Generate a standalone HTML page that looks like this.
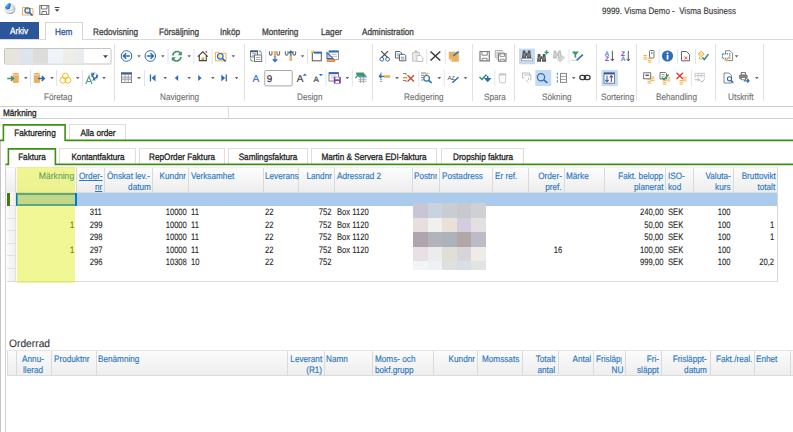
<!DOCTYPE html>
<html><head><meta charset="utf-8">
<style>
*{margin:0;padding:0;box-sizing:border-box}
html,body{width:793px;height:432px;overflow:hidden;background:#fff}
body{position:relative;font-family:"Liberation Sans",sans-serif;font-size:9.3px;color:#1e1e1e;text-rendering:geometricPrecision;-webkit-text-stroke:0.3px}
.t{position:absolute;white-space:nowrap;line-height:10px;transform:scaleX(0.88)}
.b{position:absolute}
svg{position:absolute}
</style></head><body>

<div class="t" style="top:6px;left:602px;transform-origin:0 0;color:#3a3a3a;transform:scaleX(.86);-webkit-text-stroke:0.15px;">9999. Visma Demo -&nbsp; Visma Business</div>
<div class="b" style="left:0px;top:22px;width:39px;height:17px;background:#2b579a;"></div>
<div class="t" style="top:26px;left:10px;transform-origin:0 0;color:#fff;-webkit-text-stroke:0.25px #fff;">Arkiv</div>
<div class="b" style="left:45px;top:22px;width:38px;height:18px;background:#fff;border:1px solid #d4d4d4;border-bottom:none;z-index:2"></div>
<div class="t" style="top:27px;left:54.5px;transform-origin:0 0;color:#2b579a;z-index:3;">Hem</div>
<div class="t" style="top:27px;left:93px;transform-origin:0 0;color:#444;">Redovisning</div>
<div class="t" style="top:27px;left:159px;transform-origin:0 0;color:#444;">Försäljning</div>
<div class="t" style="top:27px;left:220px;transform-origin:0 0;color:#444;">Inköp</div>
<div class="t" style="top:27px;left:262px;transform-origin:0 0;color:#444;">Montering</div>
<div class="t" style="top:27px;left:321px;transform-origin:0 0;color:#444;">Lager</div>
<div class="t" style="top:27px;left:362px;transform-origin:0 0;color:#444;">Administration</div>
<div class="b" style="left:0px;top:39px;width:793px;height:1px;background:#dadada;"></div>
<div class="b" style="left:0px;top:106px;width:793px;height:1px;background:#cfcfcf;"></div>
<div class="b" style="left:114px;top:44px;width:1px;height:57px;background:#e2e2e2;"></div>
<div class="b" style="left:244px;top:44px;width:1px;height:57px;background:#e2e2e2;"></div>
<div class="b" style="left:372px;top:44px;width:1px;height:57px;background:#e2e2e2;"></div>
<div class="b" style="left:472px;top:44px;width:1px;height:57px;background:#e2e2e2;"></div>
<div class="b" style="left:514px;top:44px;width:1px;height:57px;background:#e2e2e2;"></div>
<div class="b" style="left:596px;top:44px;width:1px;height:57px;background:#e2e2e2;"></div>
<div class="b" style="left:636px;top:44px;width:1px;height:57px;background:#e2e2e2;"></div>
<div class="b" style="left:715px;top:44px;width:1px;height:57px;background:#e2e2e2;"></div>
<div class="b" style="left:763px;top:44px;width:1px;height:57px;background:#e2e2e2;"></div>
<div class="t" style="top:92px;left:44.3px;transform-origin:0 0;color:#6e6e6e;-webkit-text-stroke:0.1px;">Företag</div>
<div class="t" style="top:92px;left:160px;transform-origin:0 0;color:#6e6e6e;-webkit-text-stroke:0.1px;">Navigering</div>
<div class="t" style="top:92px;left:296.5px;transform-origin:0 0;color:#6e6e6e;-webkit-text-stroke:0.1px;">Design</div>
<div class="t" style="top:92px;left:404px;transform-origin:0 0;color:#6e6e6e;-webkit-text-stroke:0.1px;">Redigering</div>
<div class="t" style="top:92px;left:484px;transform-origin:0 0;color:#6e6e6e;-webkit-text-stroke:0.1px;">Spara</div>
<div class="t" style="top:92px;left:542px;transform-origin:0 0;color:#6e6e6e;-webkit-text-stroke:0.1px;">Sökning</div>
<div class="t" style="top:92px;left:600.7px;transform-origin:0 0;color:#6e6e6e;-webkit-text-stroke:0.1px;">Sortering</div>
<div class="t" style="top:92px;left:656.4px;transform-origin:0 0;color:#6e6e6e;-webkit-text-stroke:0.1px;">Behandling</div>
<div class="t" style="top:92px;left:728px;transform-origin:0 0;color:#6e6e6e;-webkit-text-stroke:0.1px;">Utskrift</div>
<div class="b" style="left:0px;top:118px;width:793px;height:1px;background:#cfcfcf;"></div>
<div class="b" style="left:228px;top:107px;width:1px;height:11px;background:#dcdcdc;"></div>
<div class="t" style="top:108px;left:3px;transform-origin:0 0;color:#1e1e1e;">Märkning</div>
<div class="b" style="left:69px;top:124px;width:57px;height:17px;background:#fff;border:1px solid #dedede;border-bottom:none"></div>
<div class="t" style="top:128px;left:-2.5px;width:200px;text-align:center;transform-origin:50% 0;">Alla order</div>
<div class="b" style="left:3px;top:124px;width:63px;height:17px;background:#fff;z-index:2"></div>
<div class="t" style="top:128px;left:-65px;width:200px;text-align:center;transform-origin:50% 0;z-index:3;">Fakturering</div>
<svg style="left:0;top:0;z-index:3" width="793" height="170"><path d="M0 140.4H3.4V124.9H65.1V140.4H793M5.5 164.4H8.4V148.9H55.4V164.4H793" fill="none" stroke="#3f9010" stroke-width="1.6"/></svg>
<div class="b" style="left:0px;top:141px;width:1px;height:291px;background:#c6c6c6;"></div>
<div class="b" style="left:5px;top:165px;width:1px;height:267px;background:#d2d2d2;"></div>
<div class="b" style="left:59px;top:148px;width:77px;height:16px;background:#fff;border:1px solid #dedede;border-bottom:none"></div>
<div class="t" style="top:152px;left:-2.5px;width:200px;text-align:center;transform-origin:50% 0;">Kontantfaktura</div>
<div class="b" style="left:139px;top:148px;width:86px;height:16px;background:#fff;border:1px solid #dedede;border-bottom:none"></div>
<div class="t" style="top:152px;left:82.0px;width:200px;text-align:center;transform-origin:50% 0;">RepOrder Faktura</div>
<div class="b" style="left:228px;top:148px;width:80px;height:16px;background:#fff;border:1px solid #dedede;border-bottom:none"></div>
<div class="t" style="top:152px;left:168.0px;width:200px;text-align:center;transform-origin:50% 0;">Samlingsfaktura</div>
<div class="b" style="left:311px;top:148px;width:126px;height:16px;background:#fff;border:1px solid #dedede;border-bottom:none"></div>
<div class="t" style="top:152px;left:274.0px;width:200px;text-align:center;transform-origin:50% 0;">Martin &amp; Servera EDI-faktura</div>
<div class="b" style="left:441px;top:148px;width:83px;height:16px;background:#fff;border:1px solid #dedede;border-bottom:none"></div>
<div class="t" style="top:152px;left:382.5px;width:200px;text-align:center;transform-origin:50% 0;">Dropship faktura</div>
<div class="b" style="left:8px;top:148px;width:48px;height:16px;background:#fff;z-index:2"></div>
<div class="t" style="top:152px;left:-68px;width:200px;text-align:center;transform-origin:50% 0;z-index:3;">Faktura</div>
<div class="b" style="left:6px;top:167px;width:771px;height:26px;background:linear-gradient(#fdfdfd,#ededed);border-top:1px solid #f0f0f0;border-bottom:1px solid #dcdcdc"></div>
<div class="b" style="left:7px;top:192px;width:9px;height:89px;background:linear-gradient(90deg,#fafafa,#efefef);"></div>
<div class="b" style="left:15px;top:192px;width:1px;height:89px;background:#e2e2e2;"></div>
<div class="b" style="left:15px;top:168px;width:1px;height:24px;background:#dadada;"></div>
<div class="b" style="left:76px;top:168px;width:1px;height:24px;background:#dadada;"></div>
<div class="b" style="left:104px;top:168px;width:1px;height:24px;background:#dadada;"></div>
<div class="b" style="left:152px;top:168px;width:1px;height:24px;background:#dadada;"></div>
<div class="b" style="left:188px;top:168px;width:1px;height:24px;background:#dadada;"></div>
<div class="b" style="left:263px;top:168px;width:1px;height:24px;background:#dadada;"></div>
<div class="b" style="left:298px;top:168px;width:1px;height:24px;background:#dadada;"></div>
<div class="b" style="left:334px;top:168px;width:1px;height:24px;background:#dadada;"></div>
<div class="b" style="left:412px;top:168px;width:1px;height:24px;background:#dadada;"></div>
<div class="b" style="left:439px;top:168px;width:1px;height:24px;background:#dadada;"></div>
<div class="b" style="left:492px;top:168px;width:1px;height:24px;background:#dadada;"></div>
<div class="b" style="left:528px;top:168px;width:1px;height:24px;background:#dadada;"></div>
<div class="b" style="left:564px;top:168px;width:1px;height:24px;background:#dadada;"></div>
<div class="b" style="left:604px;top:168px;width:1px;height:24px;background:#dadada;"></div>
<div class="b" style="left:665px;top:168px;width:1px;height:24px;background:#dadada;"></div>
<div class="b" style="left:693px;top:168px;width:1px;height:24px;background:#dadada;"></div>
<div class="b" style="left:733px;top:168px;width:1px;height:24px;background:#dadada;"></div>
<div class="b" style="left:777px;top:167px;width:1px;height:114px;background:#d8d8d8;"></div>
<div class="b" style="left:16px;top:193px;width:761px;height:13px;background:#abcbee;"></div>
<div class="b" style="left:7px;top:205px;width:9px;height:1px;background:#e0e0e0;"></div>
<div class="b" style="left:7px;top:218px;width:9px;height:1px;background:#e0e0e0;"></div>
<div class="b" style="left:7px;top:230px;width:9px;height:1px;background:#e0e0e0;"></div>
<div class="b" style="left:7px;top:243px;width:9px;height:1px;background:#e0e0e0;"></div>
<div class="b" style="left:7px;top:255px;width:9px;height:1px;background:#e0e0e0;"></div>
<div class="b" style="left:7px;top:268px;width:9px;height:1px;background:#e0e0e0;"></div>
<div class="b" style="left:7px;top:281px;width:771px;height:1px;background:#dcdcdc;"></div>
<div class="b" style="left:7px;top:193px;width:3px;height:13px;background:#3d7d0a;"></div>
<div class="b" style="left:16px;top:193px;width:61px;height:13px;background:transparent;border:2px solid #0078d7;z-index:1"></div>
<div class="b" style="left:16px;top:168px;width:60px;height:24px;background:linear-gradient(#fdfdfd,#f6f6f6);"></div>
<div class="t" style="top:171px;right:718.9px;transform-origin:100% 0;text-align:right;color:#0f72a8;-webkit-text-stroke:0.15px #0f72a8;transform:scaleX(.93);">Märkning</div>
<div class="t" style="top:171px;left:78.7px;transform-origin:0 0;color:#2b78c2;-webkit-text-stroke:0.15px #2b78c2;transform:scaleX(.88);"><u>Order-</u></div>
<div class="t" style="top:182px;right:691px;transform-origin:100% 0;text-align:right;color:#2b78c2;-webkit-text-stroke:0.15px #2b78c2;transform:scaleX(.88);"><u>nr</u></div>
<div class="t" style="top:171px;left:106.5px;transform-origin:0 0;color:#2b78c2;-webkit-text-stroke:0.15px #2b78c2;transform:scaleX(.88);">Önskat lev.-</div>
<div class="t" style="top:182px;right:642.5px;transform-origin:100% 0;text-align:right;color:#2b78c2;-webkit-text-stroke:0.15px #2b78c2;transform:scaleX(.88);">datum</div>
<div class="t" style="top:171px;right:606.6px;transform-origin:100% 0;text-align:right;color:#2b78c2;-webkit-text-stroke:0.15px #2b78c2;transform:scaleX(.88);">Kundnr</div>
<div class="t" style="top:171px;left:191px;transform-origin:0 0;color:#2b78c2;-webkit-text-stroke:0.15px #2b78c2;transform:scaleX(.88);">Verksamhet</div>
<div class="t" style="top:171px;left:264.6px;transform-origin:0 0;color:#2b78c2;-webkit-text-stroke:0.15px #2b78c2;transform:scaleX(.88);">Leverans</div>
<div class="t" style="top:171px;right:461px;transform-origin:100% 0;text-align:right;color:#2b78c2;-webkit-text-stroke:0.15px #2b78c2;transform:scaleX(.88);">Landnr</div>
<div class="t" style="top:171px;left:336.6px;transform-origin:0 0;color:#2b78c2;-webkit-text-stroke:0.15px #2b78c2;transform:scaleX(.88);">Adressrad 2</div>
<div class="t" style="top:171px;left:414.4px;transform-origin:0 0;color:#2b78c2;-webkit-text-stroke:0.15px #2b78c2;transform:scaleX(.88);"><span style="display:inline-block;width:26px;overflow:hidden;vertical-align:top">Postnr</span></div>
<div class="t" style="top:171px;left:441.8px;transform-origin:0 0;color:#2b78c2;-webkit-text-stroke:0.15px #2b78c2;transform:scaleX(.88);">Postadress</div>
<div class="t" style="top:171px;left:494.8px;transform-origin:0 0;color:#2b78c2;-webkit-text-stroke:0.15px #2b78c2;transform:scaleX(.88);">Er ref.</div>
<div class="t" style="top:171px;right:231px;transform-origin:100% 0;text-align:right;color:#2b78c2;-webkit-text-stroke:0.15px #2b78c2;transform:scaleX(.88);">Order-</div>
<div class="t" style="top:182px;right:231px;transform-origin:100% 0;text-align:right;color:#2b78c2;-webkit-text-stroke:0.15px #2b78c2;transform:scaleX(.88);">pref.</div>
<div class="t" style="top:171px;left:566.4px;transform-origin:0 0;color:#2b78c2;-webkit-text-stroke:0.15px #2b78c2;transform:scaleX(.88);">Märke</div>
<div class="t" style="top:171px;right:129.89999999999998px;transform-origin:100% 0;text-align:right;color:#2b78c2;-webkit-text-stroke:0.15px #2b78c2;transform:scaleX(.88);">Fakt. belopp</div>
<div class="t" style="top:182px;right:129.89999999999998px;transform-origin:100% 0;text-align:right;color:#2b78c2;-webkit-text-stroke:0.15px #2b78c2;transform:scaleX(.88);">planerat</div>
<div class="t" style="top:171px;left:667.7px;transform-origin:0 0;color:#2b78c2;-webkit-text-stroke:0.15px #2b78c2;transform:scaleX(.88);">ISO-</div>
<div class="t" style="top:182px;left:667.7px;transform-origin:0 0;color:#2b78c2;-webkit-text-stroke:0.15px #2b78c2;transform:scaleX(.88);">kod</div>
<div class="t" style="top:171px;right:62.299999999999955px;transform-origin:100% 0;text-align:right;color:#2b78c2;-webkit-text-stroke:0.15px #2b78c2;transform:scaleX(.88);">Valuta-</div>
<div class="t" style="top:182px;right:62.299999999999955px;transform-origin:100% 0;text-align:right;color:#2b78c2;-webkit-text-stroke:0.15px #2b78c2;transform:scaleX(.88);">kurs</div>
<div class="t" style="top:171px;right:17.700000000000045px;transform-origin:100% 0;text-align:right;color:#2b78c2;-webkit-text-stroke:0.15px #2b78c2;transform:scaleX(.88);">Bruttovikt</div>
<div class="t" style="top:182px;right:17.700000000000045px;transform-origin:100% 0;text-align:right;color:#2b78c2;-webkit-text-stroke:0.15px #2b78c2;transform:scaleX(.88);">totalt</div>
<div class="t" style="top:207px;right:690.8px;transform-origin:100% 0;text-align:right;transform:scaleX(.82);-webkit-text-stroke:0.1px;">311</div>
<div class="t" style="top:207px;right:606.6px;transform-origin:100% 0;text-align:right;transform:scaleX(.82);-webkit-text-stroke:0.1px;">10000</div>
<div class="t" style="top:207px;left:191.2px;transform-origin:0 0;transform:scaleX(.82);-webkit-text-stroke:0.1px;">11</div>
<div class="t" style="top:207px;left:264.5px;transform-origin:0 0;transform:scaleX(.82);-webkit-text-stroke:0.1px;">22</div>
<div class="t" style="top:207px;right:461px;transform-origin:100% 0;text-align:right;transform:scaleX(.82);-webkit-text-stroke:0.1px;">752</div>
<div class="t" style="top:207px;left:336.5px;transform-origin:0 0;transform:scaleX(.82);-webkit-text-stroke:0.1px;">Box 1120</div>
<div class="t" style="top:207px;right:129.5px;transform-origin:100% 0;text-align:right;transform:scaleX(.82);-webkit-text-stroke:0.1px;">240,00</div>
<div class="t" style="top:207px;left:667.6px;transform-origin:0 0;transform:scaleX(.82);-webkit-text-stroke:0.1px;">SEK</div>
<div class="t" style="top:207px;right:62.200000000000045px;transform-origin:100% 0;text-align:right;transform:scaleX(.82);-webkit-text-stroke:0.1px;">100</div>
<div class="t" style="top:220px;right:718.5px;transform-origin:100% 0;text-align:right;transform:scaleX(.82);-webkit-text-stroke:0.1px;">1</div>
<div class="t" style="top:220px;right:690.8px;transform-origin:100% 0;text-align:right;transform:scaleX(.82);-webkit-text-stroke:0.1px;">299</div>
<div class="t" style="top:220px;right:606.6px;transform-origin:100% 0;text-align:right;transform:scaleX(.82);-webkit-text-stroke:0.1px;">10000</div>
<div class="t" style="top:220px;left:191.2px;transform-origin:0 0;transform:scaleX(.82);-webkit-text-stroke:0.1px;">11</div>
<div class="t" style="top:220px;left:264.5px;transform-origin:0 0;transform:scaleX(.82);-webkit-text-stroke:0.1px;">22</div>
<div class="t" style="top:220px;right:461px;transform-origin:100% 0;text-align:right;transform:scaleX(.82);-webkit-text-stroke:0.1px;">752</div>
<div class="t" style="top:220px;left:336.5px;transform-origin:0 0;transform:scaleX(.82);-webkit-text-stroke:0.1px;">Box 1120</div>
<div class="t" style="top:220px;right:129.5px;transform-origin:100% 0;text-align:right;transform:scaleX(.82);-webkit-text-stroke:0.1px;">50,00</div>
<div class="t" style="top:220px;left:667.6px;transform-origin:0 0;transform:scaleX(.82);-webkit-text-stroke:0.1px;">SEK</div>
<div class="t" style="top:220px;right:62.200000000000045px;transform-origin:100% 0;text-align:right;transform:scaleX(.82);-webkit-text-stroke:0.1px;">100</div>
<div class="t" style="top:220px;right:18.5px;transform-origin:100% 0;text-align:right;transform:scaleX(.82);-webkit-text-stroke:0.1px;">1</div>
<div class="t" style="top:232px;right:690.8px;transform-origin:100% 0;text-align:right;transform:scaleX(.82);-webkit-text-stroke:0.1px;">298</div>
<div class="t" style="top:232px;right:606.6px;transform-origin:100% 0;text-align:right;transform:scaleX(.82);-webkit-text-stroke:0.1px;">10000</div>
<div class="t" style="top:232px;left:191.2px;transform-origin:0 0;transform:scaleX(.82);-webkit-text-stroke:0.1px;">11</div>
<div class="t" style="top:232px;left:264.5px;transform-origin:0 0;transform:scaleX(.82);-webkit-text-stroke:0.1px;">22</div>
<div class="t" style="top:232px;right:461px;transform-origin:100% 0;text-align:right;transform:scaleX(.82);-webkit-text-stroke:0.1px;">752</div>
<div class="t" style="top:232px;left:336.5px;transform-origin:0 0;transform:scaleX(.82);-webkit-text-stroke:0.1px;">Box 1120</div>
<div class="t" style="top:232px;right:129.5px;transform-origin:100% 0;text-align:right;transform:scaleX(.82);-webkit-text-stroke:0.1px;">50,00</div>
<div class="t" style="top:232px;left:667.6px;transform-origin:0 0;transform:scaleX(.82);-webkit-text-stroke:0.1px;">SEK</div>
<div class="t" style="top:232px;right:62.200000000000045px;transform-origin:100% 0;text-align:right;transform:scaleX(.82);-webkit-text-stroke:0.1px;">100</div>
<div class="t" style="top:232px;right:18.5px;transform-origin:100% 0;text-align:right;transform:scaleX(.82);-webkit-text-stroke:0.1px;">1</div>
<div class="t" style="top:245px;right:718.5px;transform-origin:100% 0;text-align:right;transform:scaleX(.82);-webkit-text-stroke:0.1px;">1</div>
<div class="t" style="top:245px;right:690.8px;transform-origin:100% 0;text-align:right;transform:scaleX(.82);-webkit-text-stroke:0.1px;">297</div>
<div class="t" style="top:245px;right:606.6px;transform-origin:100% 0;text-align:right;transform:scaleX(.82);-webkit-text-stroke:0.1px;">10000</div>
<div class="t" style="top:245px;left:191.2px;transform-origin:0 0;transform:scaleX(.82);-webkit-text-stroke:0.1px;">11</div>
<div class="t" style="top:245px;left:264.5px;transform-origin:0 0;transform:scaleX(.82);-webkit-text-stroke:0.1px;">22</div>
<div class="t" style="top:245px;right:461px;transform-origin:100% 0;text-align:right;transform:scaleX(.82);-webkit-text-stroke:0.1px;">752</div>
<div class="t" style="top:245px;left:336.5px;transform-origin:0 0;transform:scaleX(.82);-webkit-text-stroke:0.1px;">Box 1120</div>
<div class="t" style="top:245px;right:230.70000000000005px;transform-origin:100% 0;text-align:right;transform:scaleX(.82);-webkit-text-stroke:0.1px;">16</div>
<div class="t" style="top:245px;right:129.5px;transform-origin:100% 0;text-align:right;transform:scaleX(.82);-webkit-text-stroke:0.1px;">100,00</div>
<div class="t" style="top:245px;left:667.6px;transform-origin:0 0;transform:scaleX(.82);-webkit-text-stroke:0.1px;">SEK</div>
<div class="t" style="top:245px;right:62.200000000000045px;transform-origin:100% 0;text-align:right;transform:scaleX(.82);-webkit-text-stroke:0.1px;">100</div>
<div class="t" style="top:257px;right:690.8px;transform-origin:100% 0;text-align:right;transform:scaleX(.82);-webkit-text-stroke:0.1px;">296</div>
<div class="t" style="top:257px;right:606.6px;transform-origin:100% 0;text-align:right;transform:scaleX(.82);-webkit-text-stroke:0.1px;">10308</div>
<div class="t" style="top:257px;left:191.2px;transform-origin:0 0;transform:scaleX(.82);-webkit-text-stroke:0.1px;">10</div>
<div class="t" style="top:257px;left:264.5px;transform-origin:0 0;transform:scaleX(.82);-webkit-text-stroke:0.1px;">22</div>
<div class="t" style="top:257px;right:461px;transform-origin:100% 0;text-align:right;transform:scaleX(.82);-webkit-text-stroke:0.1px;">752</div>
<div class="t" style="top:257px;right:129.5px;transform-origin:100% 0;text-align:right;transform:scaleX(.82);-webkit-text-stroke:0.1px;">999,00</div>
<div class="t" style="top:257px;left:667.6px;transform-origin:0 0;transform:scaleX(.82);-webkit-text-stroke:0.1px;">SEK</div>
<div class="t" style="top:257px;right:62.200000000000045px;transform-origin:100% 0;text-align:right;transform:scaleX(.82);-webkit-text-stroke:0.1px;">100</div>
<div class="t" style="top:257px;right:18.5px;transform-origin:100% 0;text-align:right;transform:scaleX(.82);-webkit-text-stroke:0.1px;">20,2</div>
<div class="b" style="left:17px;top:167px;width:58px;height:116px;background:rgba(224,236,0,0.415);z-index:6"></div>
<div class="b" style="left:413px;top:203px;width:15px;height:15px;background:#c8c6d6;z-index:4"></div>
<div class="b" style="left:428px;top:203px;width:14px;height:15px;background:#c9d3df;z-index:4"></div>
<div class="b" style="left:442px;top:203px;width:15px;height:15px;background:#c8ccd3;z-index:4"></div>
<div class="b" style="left:457px;top:203px;width:14px;height:15px;background:#c8c9ce;z-index:4"></div>
<div class="b" style="left:471px;top:203px;width:15px;height:15px;background:#cfd0d4;z-index:4"></div>
<div class="b" style="left:413px;top:218px;width:15px;height:14px;background:#e8dede;z-index:4"></div>
<div class="b" style="left:428px;top:218px;width:14px;height:14px;background:#f0f0f1;z-index:4"></div>
<div class="b" style="left:442px;top:218px;width:15px;height:14px;background:#eae0d8;z-index:4"></div>
<div class="b" style="left:457px;top:218px;width:14px;height:14px;background:#d2cedf;z-index:4"></div>
<div class="b" style="left:471px;top:218px;width:15px;height:14px;background:#e4e0e1;z-index:4"></div>
<div class="b" style="left:413px;top:232px;width:15px;height:15px;background:#aea5b0;z-index:4"></div>
<div class="b" style="left:428px;top:232px;width:14px;height:15px;background:#b2b4b9;z-index:4"></div>
<div class="b" style="left:442px;top:232px;width:15px;height:15px;background:#adb3bc;z-index:4"></div>
<div class="b" style="left:457px;top:232px;width:14px;height:15px;background:#b3a7a6;z-index:4"></div>
<div class="b" style="left:471px;top:232px;width:15px;height:15px;background:#bdbbc8;z-index:4"></div>
<div class="b" style="left:413px;top:247px;width:15px;height:14px;background:#e8e0e4;z-index:4"></div>
<div class="b" style="left:428px;top:247px;width:14px;height:14px;background:#ececee;z-index:4"></div>
<div class="b" style="left:442px;top:247px;width:15px;height:14px;background:#e0dfd6;z-index:4"></div>
<div class="b" style="left:457px;top:247px;width:14px;height:14px;background:#d7d5d9;z-index:4"></div>
<div class="b" style="left:471px;top:247px;width:15px;height:14px;background:#efebe7;z-index:4"></div>
<div class="b" style="left:413px;top:261px;width:15px;height:9px;background:#f2f4f5;z-index:4"></div>
<div class="b" style="left:428px;top:261px;width:14px;height:9px;background:#eef2f6;z-index:4"></div>
<div class="b" style="left:442px;top:261px;width:15px;height:9px;background:#dedfe3;z-index:4"></div>
<div class="b" style="left:457px;top:261px;width:14px;height:9px;background:#d8dee6;z-index:4"></div>
<div class="b" style="left:471px;top:261px;width:15px;height:9px;background:#e2e3e5;z-index:4"></div>
<div class="t" style="top:339px;left:9.3px;transform-origin:0 0;color:#333;font-size:10.8px;transform:scaleX(.95);-webkit-text-stroke:0.1px;">Orderrad</div>
<div class="b" style="left:7px;top:350px;width:786px;height:26px;background:linear-gradient(#fbfbfb,#eeeeee);border-top:1px solid #e6e6e6;border-bottom:1px solid #dcdcdc;border-left:1px solid #dcdcdc"></div>
<div class="b" style="left:16px;top:351px;width:1px;height:25px;background:#dadada;"></div>
<div class="b" style="left:51px;top:351px;width:1px;height:25px;background:#dadada;"></div>
<div class="b" style="left:96px;top:351px;width:1px;height:25px;background:#dadada;"></div>
<div class="b" style="left:287px;top:351px;width:1px;height:25px;background:#dadada;"></div>
<div class="b" style="left:324px;top:351px;width:1px;height:25px;background:#dadada;"></div>
<div class="b" style="left:372px;top:351px;width:1px;height:25px;background:#dadada;"></div>
<div class="b" style="left:433px;top:351px;width:1px;height:25px;background:#dadada;"></div>
<div class="b" style="left:477px;top:351px;width:1px;height:25px;background:#dadada;"></div>
<div class="b" style="left:522px;top:351px;width:1px;height:25px;background:#dadada;"></div>
<div class="b" style="left:558px;top:351px;width:1px;height:25px;background:#dadada;"></div>
<div class="b" style="left:593px;top:351px;width:1px;height:25px;background:#dadada;"></div>
<div class="b" style="left:625px;top:351px;width:1px;height:25px;background:#dadada;"></div>
<div class="b" style="left:661px;top:351px;width:1px;height:25px;background:#dadada;"></div>
<div class="b" style="left:710px;top:351px;width:1px;height:25px;background:#dadada;"></div>
<div class="b" style="left:754px;top:351px;width:1px;height:25px;background:#dadada;"></div>
<div class="b" style="left:790px;top:351px;width:1px;height:25px;background:#dadada;"></div>
<div class="t" style="top:354px;left:-67.3px;width:200px;text-align:center;transform-origin:50% 0;color:#2b78c2;-webkit-text-stroke:0.15px #2b78c2;transform:scaleX(.88);">Annu-</div>
<div class="t" style="top:365px;left:-67.3px;width:200px;text-align:center;transform-origin:50% 0;color:#2b78c2;-webkit-text-stroke:0.15px #2b78c2;transform:scaleX(.88);">llerad</div>
<div class="t" style="top:354px;left:53.9px;transform-origin:0 0;color:#2b78c2;-webkit-text-stroke:0.15px #2b78c2;transform:scaleX(.88);">Produktnr</div>
<div class="t" style="top:354px;left:98px;transform-origin:0 0;color:#2b78c2;-webkit-text-stroke:0.15px #2b78c2;transform:scaleX(.88);">Benämning</div>
<div class="t" style="top:354px;right:471.3px;transform-origin:100% 0;text-align:right;color:#2b78c2;-webkit-text-stroke:0.15px #2b78c2;transform:scaleX(.88);">Leverant</div>
<div class="t" style="top:365px;right:471.3px;transform-origin:100% 0;text-align:right;color:#2b78c2;-webkit-text-stroke:0.15px #2b78c2;transform:scaleX(.88);">(R1)</div>
<div class="t" style="top:354px;left:326px;transform-origin:0 0;color:#2b78c2;-webkit-text-stroke:0.15px #2b78c2;transform:scaleX(.88);">Namn</div>
<div class="t" style="top:354px;left:374.7px;transform-origin:0 0;color:#2b78c2;-webkit-text-stroke:0.15px #2b78c2;transform:scaleX(.88);">Moms- och</div>
<div class="t" style="top:365px;left:374.7px;transform-origin:0 0;color:#2b78c2;-webkit-text-stroke:0.15px #2b78c2;transform:scaleX(.88);">bokf.grupp</div>
<div class="t" style="top:354px;right:317.6px;transform-origin:100% 0;text-align:right;color:#2b78c2;-webkit-text-stroke:0.15px #2b78c2;transform:scaleX(.88);">Kundnr</div>
<div class="t" style="top:354px;left:481.7px;transform-origin:0 0;color:#2b78c2;-webkit-text-stroke:0.15px #2b78c2;transform:scaleX(.88);">Momssats</div>
<div class="t" style="top:354px;right:237.70000000000005px;transform-origin:100% 0;text-align:right;color:#2b78c2;-webkit-text-stroke:0.15px #2b78c2;transform:scaleX(.88);">Totalt</div>
<div class="t" style="top:365px;right:237.70000000000005px;transform-origin:100% 0;text-align:right;color:#2b78c2;-webkit-text-stroke:0.15px #2b78c2;transform:scaleX(.88);">antal</div>
<div class="t" style="top:354px;right:202px;transform-origin:100% 0;text-align:right;color:#2b78c2;-webkit-text-stroke:0.15px #2b78c2;transform:scaleX(.88);">Antal</div>
<div class="t" style="top:354px;left:595.7px;transform-origin:0 0;color:#2b78c2;-webkit-text-stroke:0.15px #2b78c2;transform:scaleX(.88);"><span style="display:inline-block;width:29px;overflow:hidden;vertical-align:top">Frisläppt</span></div>
<div class="t" style="top:365px;right:169.60000000000002px;transform-origin:100% 0;text-align:right;color:#2b78c2;-webkit-text-stroke:0.15px #2b78c2;transform:scaleX(.88);">NU</div>
<div class="t" style="top:354px;right:134px;transform-origin:100% 0;text-align:right;color:#2b78c2;-webkit-text-stroke:0.15px #2b78c2;transform:scaleX(.88);">Fri-</div>
<div class="t" style="top:365px;right:134px;transform-origin:100% 0;text-align:right;color:#2b78c2;-webkit-text-stroke:0.15px #2b78c2;transform:scaleX(.88);">släppt</div>
<div class="t" style="top:354px;right:85.79999999999995px;transform-origin:100% 0;text-align:right;color:#2b78c2;-webkit-text-stroke:0.15px #2b78c2;transform:scaleX(.88);">Frisläppt-</div>
<div class="t" style="top:365px;right:85.79999999999995px;transform-origin:100% 0;text-align:right;color:#2b78c2;-webkit-text-stroke:0.15px #2b78c2;transform:scaleX(.88);">datum</div>
<div class="t" style="top:354px;right:40.60000000000002px;transform-origin:100% 0;text-align:right;color:#2b78c2;-webkit-text-stroke:0.15px #2b78c2;transform:scaleX(.88);">Fakt./real.</div>
<div class="t" style="top:354px;left:756.4px;transform-origin:0 0;color:#2b78c2;-webkit-text-stroke:0.15px #2b78c2;transform:scaleX(.88);">Enhet</div>
<svg style="left:0;top:0;z-index:5" width="793" height="106" viewBox="0 0 793 106"><defs><radialGradient id="orb" cx="0.38" cy="0.35" r="0.7"><stop offset="0" stop-color="#fff"/><stop offset="0.6" stop-color="#d9dcdf"/><stop offset="1" stop-color="#8d939a"/></radialGradient><radialGradient id="orbb" cx="0.3" cy="0.3" r="0.7"><stop offset="0" stop-color="#6cc0f0"/><stop offset="1" stop-color="#1565b8"/></radialGradient></defs><circle cx="10" cy="8.7" r="5.4" fill="url(#orb)"/><path d="M5 7.8A5 5 0 0 1 10.6 3.4q.8 3-1 5.3-2.4 1.8-4.6-.9z" fill="url(#orbb)"/><path d="M5.6 11.2q4 2.6 8.6-.6" fill="none" stroke="#fff" stroke-width="0.9"/><path d="M22.5 7.5h4l1 1h5.5v6.5h-10.5z" fill="none" stroke="#f0b050" stroke-width="1"/><circle cx="27.5" cy="10.5" r="2.6" fill="#f7e0b0" stroke="#2e6db3" stroke-width="1.2"/><path d="M29.3 12.4l3.2 3.2" stroke="#2e6db3" stroke-width="1.6"/><path d="M39.8 5.5h9v9h-9z" fill="none" stroke="#777" stroke-width="1.1"/><path d="M41.5 5.5v3.5h5.5v-3.5M42 14.5v-3h4.5v3" fill="none" stroke="#777" stroke-width="1"/><rect x="54.8" y="7" width="4.6" height="1" fill="#444"/><path d="M54.8 9.2h4.6l-2.3 2.5z" fill="#444"/><rect x="4.5" y="48.5" width="106.5" height="15.5" rx="1" fill="#fff" stroke="#c4c4c4" stroke-width="1"/><rect x="5" y="49" width="14" height="14.5" fill="#e7e3dd"/><rect x="19" y="49" width="14" height="14.5" fill="#dde5ec"/><rect x="33" y="49" width="15" height="14.5" fill="#dcdcda"/><rect x="48" y="49" width="15" height="14.5" fill="#eef4fa"/><rect x="63" y="49" width="14" height="14.5" fill="#efede8"/><rect x="77" y="49" width="7" height="14.5" fill="#e8ecee"/><path d="M103 55.3h5l-2.5 2.8z" fill="#444"/><path d="M12.6 73.5q3.1-1.4 6.2 0v9q-3.1 1.2-6.2 0z" fill="#e8b060"/><path d="M12.8 74.6q3 1 5.8 0" stroke="#fff" stroke-width="0.6" fill="none"/><path d="M7.3 78.5h6M11 76.2l2.4 2.3-2.4 2.3" stroke="#3d9070" stroke-width="1.5" fill="none"/><path d="M24.0 77h3.6l-1.8 2.2z" fill="#666"/><rect x="30" y="70" width="1" height="16" fill="#dbe5f1"/><path d="M33.8 73.5q3.1-1.4 6.2 0v9q-3.1 1.2-6.2 0z" fill="#e8b060"/><path d="M34 74.6q3 1 5.8 0" stroke="#fff" stroke-width="0.6" fill="none"/><path d="M38 78.5h6M41.8 76.2l2.4 2.3-2.4 2.3" stroke="#2e6db3" stroke-width="1.6" fill="none"/><path d="M50.2 77h3.6l-1.8 2.2z" fill="#666"/><rect x="56" y="70" width="1" height="16" fill="#dbe5f1"/><g fill="none" stroke="#f4c020" stroke-width="1"><circle cx="65.4" cy="76" r="3"/><circle cx="62.9" cy="80.2" r="3"/><circle cx="67.9" cy="80.2" r="3"/></g><path d="M75.9 77h3.6l-1.8 2.2z" fill="#666"/><rect x="82" y="70" width="1" height="16" fill="#dbe5f1"/><circle cx="93.6" cy="76.6" r="4.1" fill="#fff" stroke="#a9c4e6" stroke-width="0.8"/><path d="M91.2 73.6q1.5-.9 3-.6l.3 1.6-1.3 1 .9 1.8 1.8-.4.3-2.3 1.5-.3q.6 1.8-.3 3.5l-1.8.6-.6 1.7q-1.4.4-2.2-.2l.4-2-1.8-1.3z" fill="#2e6db3"/><path d="M85.8 84l3.1-7.6 3.1 7.6M87 81.5h3.8" stroke="#4f9a78" stroke-width="1.1" fill="none"/><path d="M102.2 77h3.6l-1.8 2.2z" fill="#666"/><circle cx="126.5" cy="56" r="5.3" fill="none" stroke="#2e6db3" stroke-width="1"/><circle cx="150.3" cy="56" r="5.3" fill="none" stroke="#2e6db3" stroke-width="1"/><path d="M130 56h-6.3M126.2 53.2l-2.8 2.8 2.8 2.8" stroke="#2e6db3" stroke-width="1.6" fill="none"/><path d="M146.8 56h6.3M150.6 53.2l2.8 2.8-2.8 2.8" stroke="#2e6db3" stroke-width="1.6" fill="none"/><path d="M137.2 55.2h3.6l-1.8 2.2z" fill="#666"/><path d="M161.0 55.2h3.6l-1.8 2.2z" fill="#666"/><rect x="167.5" y="49" width="1" height="15" fill="#dbe5f1"/><g stroke="#3a8f62" stroke-width="1.7" fill="none"><path d="M172.8 55.5a4.3 4.3 0 0 1 7.6-2.4"/><path d="M180.9 57a4.3 4.3 0 0 1-7.6 2.4"/></g><path d="M181.8 51.3v4h-4z" fill="#3a8f62"/><path d="M171.8 61.2v-4h4z" fill="#3a8f62"/><path d="M187.39999999999998 55.2h3.6l-1.8 2.2z" fill="#666"/><rect x="193.5" y="49" width="1" height="15" fill="#dbe5f1"/><path d="M197.8 56.6l5-4.8 5 4.8M199.3 55.4v5.2h7v-5.2" stroke="#444" stroke-width="1.1" fill="none"/><rect x="201.6" y="57.5" width="2.6" height="2.5" fill="#e8a030"/><circle cx="206.3" cy="51.8" r="0.9" fill="#e03020"/><rect x="211.5" y="49" width="1" height="15" fill="#dbe5f1"/><path d="M215.5 52.3h3.5l1 1h6v7.5h-10.5z" fill="none" stroke="#f0b050" stroke-width="1"/><circle cx="220.3" cy="56.3" r="2.8" fill="#f9e6c0" stroke="#2e6db3" stroke-width="1.2"/><path d="M222.3 58.3l3.4 3.2" stroke="#2e6db3" stroke-width="1.6"/><path d="M231.5 55.2h3.6l-1.8 2.2z" fill="#666"/><rect x="121" y="72.3" width="11" height="2" fill="#2b5797"/><rect x="121.5" y="74.3" width="10" height="8.2" fill="#fff" stroke="#888" stroke-width="1"/><rect x="122" y="77" width="9" height="2.5" fill="#c9dcf3"/><path d="M125 74.5v8M128.3 74.5v8M121.5 77h10M121.5 79.7h10" stroke="#999" stroke-width="0.8"/><path d="M137.2 77h3.6l-1.8 2.2z" fill="#666"/><rect x="144" y="70" width="1" height="16" fill="#dbe5f1"/><rect x="149.8" y="74.4" width="1.3" height="7" fill="#2e6db3"/><path d="M155.5 74.4v7l-3.8-3.5z" fill="#2e6db3"/><path d="M163.39999999999998 77h3.6l-1.8 2.2z" fill="#666"/><path d="M178.2 75v6l-3.4-3z" fill="#2e6db3"/><path d="M187.39999999999998 77h3.6l-1.8 2.2z" fill="#666"/><path d="M198.2 75v6l3.4-3z" fill="#2e6db3"/><path d="M211.0 77h3.6l-1.8 2.2z" fill="#666"/><path d="M221.3 74.4v7l3.8-3.5z" fill="#2e6db3"/><rect x="225.6" y="74.4" width="1.3" height="7" fill="#2e6db3"/><path d="M234.79999999999998 77h3.6l-1.8 2.2z" fill="#666"/><rect x="250.5" y="51" width="7" height="6" fill="#fff" stroke="#666" stroke-width="0.9"/><rect x="250.5" y="50.6" width="7" height="1.6" fill="#2b5797"/><path d="M252 53.6h4.5M252 55.3h4.5" stroke="#888" stroke-width="0.7"/><rect x="254.5" y="55" width="7.2" height="6.5" fill="#fff" stroke="#666" stroke-width="0.9"/><path d="M256 57.5h4.5M256 59.5h4.5" stroke="#888" stroke-width="0.7"/><path d="M258.5 50.8a3 3 0 0 1 3 3M253.3 61.3a3 3 0 0 1-3-3" stroke="#3a9a6a" stroke-width="1" fill="none"/><rect x="265.2" y="49" width="1" height="15" fill="#dbe5f1"/><path d="M269.40000000000003 51.2v2.6a1.3 1.3 0 0 0 2.6 0v-2.6M277.0 51.2v2.6a1.3 1.3 0 0 0 2.6 0v-2.6" stroke="#707070" stroke-width="1.1" fill="none"/><path d="M285.40000000000003 51.2v2.6a1.3 1.3 0 0 0 2.6 0v-2.6M293.0 51.2v2.6a1.3 1.3 0 0 0 2.6 0v-2.6" stroke="#707070" stroke-width="1.1" fill="none"/><rect x="273.8" y="51" width="2.4" height="6" fill="#e8b060"/><path d="M275 56.5v4.8M272.8 59.2l2.2 2.3 2.2-2.3" stroke="#2e6db3" stroke-width="1.3" fill="none"/><rect x="289.6" y="55" width="2.4" height="6" fill="#e8b060"/><path d="M290.8 55.5v-4.4M288.6 53.3l2.2-2.2 2.2 2.2" stroke="#2e6db3" stroke-width="1.3" fill="none"/><path d="M300.7 55.2h3.6l-1.8 2.2z" fill="#666"/><rect x="307" y="49" width="1" height="15" fill="#dbe5f1"/><rect x="312.3" y="52.3" width="9" height="8.5" fill="none" stroke="#555" stroke-width="1"/><rect x="314" y="51.8" width="7.8" height="1.8" fill="#2b6cc0"/><path d="M311 50.5l2.5 2.5M313.2 50v2M311 52.5h2" stroke="#f2c030" stroke-width="0.9"/><rect x="329" y="51" width="9.5" height="8.5" fill="#fff" stroke="#888" stroke-width="0.9"/><rect x="329" y="50.6" width="9.5" height="1.9" fill="#2b6cc0"/><path d="M331.5 54.5h5.5M331.5 56.6h5.5" stroke="#aaa" stroke-width="0.7"/><path d="M327 52.6v6h6z" fill="none" stroke="#2b6cc0" stroke-width="1.2"/><rect x="326.8" y="59.2" width="8.4" height="2.7" fill="#ee7a20"/><path d="M328.5 60.5h5" stroke="#fff" stroke-width="0.6" stroke-dasharray="1 0.8"/><text x="252.6" y="81.8" font-family="Liberation Sans" font-size="10.2" fill="#3d75c4" stroke="#3d75c4" stroke-width="0.2">A</text><rect x="264.8" y="70.5" width="27.4" height="15.4" rx="1" fill="#fff" stroke="#a9a9a9" stroke-width="1"/><text x="266.8" y="81.8" font-family="Liberation Sans" font-size="9.8" fill="#222" stroke="#222" stroke-width="0.1">9</text><text x="296.8" y="82.2" font-family="Liberation Sans" font-size="10" fill="#444" stroke="#444" stroke-width="0.2">A</text><path d="M302.8 75.8l2-2.2 2 2.2z" fill="#2b6cc0"/><text x="313.6" y="82.2" font-family="Liberation Sans" font-size="8" fill="#444" stroke="#444" stroke-width="0.2">A</text><path d="M319 74h3.8l-1.9 2.2z" fill="#2b6cc0"/><rect x="325.5" y="70" width="1" height="16" fill="#dbe5f1"/><rect x="329" y="72.5" width="9.5" height="8.5" fill="#fff" stroke="#777" stroke-width="0.9"/><rect x="329" y="72.3" width="9.5" height="1.9" fill="#2b6cc0"/><path d="M331 76h5M331 78h3" stroke="#aaa" stroke-width="0.7"/><rect x="333.8" y="76.8" width="7" height="6.7" fill="#7b3fb0"/><rect x="335.3" y="77.3" width="4" height="2" fill="#fff"/><rect x="335.5" y="81" width="3.5" height="2" fill="#fff"/><path d="M345.5 77h3.6l-1.8 2.2z" fill="#666"/><rect x="351.8" y="70" width="1" height="16" fill="#dbe5f1"/><path d="M356 72.4h7.6l2.8 3.8h-8.2l-2.6 2.2-.8-.6 1.9-2.1z" fill="#3d9a70"/><rect x="358.5" y="76.3" width="8" height="1.1" fill="#2b6cc0"/><path d="M360.5 77.5v5.5M363.3 77.5v5.5M358.5 79.3h8M358.5 81.3h8" stroke="#9a9a9a" stroke-width="0.8"/><path d="M381.2 51.2l6.5 6.4M388 51.2l-6.5 6.4" stroke="#444" stroke-width="1.1"/><g fill="none" stroke="#2e6db3" stroke-width="1"><circle cx="381.8" cy="59.2" r="1.9"/><circle cx="387.6" cy="59.2" r="1.9"/></g><path d="M395.5 51.5h4.5l1.5 1.5v5h-6z" fill="#fff" stroke="#555" stroke-width="0.9"/><path d="M399.5 54.3h5l1.3 1.3v5.2h-6.3z" fill="#fff" stroke="#555" stroke-width="0.9"/><path d="M396.8 54h2.5M396.8 55.8h2.5M401 57.3h3.3M401 59h3.3" stroke="#4a8ad0" stroke-width="0.8"/><path d="M412.5 52.5h7v8.7h-7z" fill="#e8e8e8" stroke="#c2c2c2" stroke-width="0.9"/><rect x="414.5" y="50.5" width="3" height="2.3" fill="#c2c2c2"/><path d="M417 55.5h3.8l2 2v4h-5.8z" fill="#fff" stroke="#bbb" stroke-width="0.9"/><rect x="426.3" y="49" width="1" height="15" fill="#dbe5f1"/><path d="M430.5 51.5l9.8 9M440.3 51.5l-9.8 9" stroke="#3a3a3a" stroke-width="1.5"/><rect x="444.8" y="49" width="1" height="15" fill="#dbe5f1"/><path d="M448.8 51.8h10v10h-7.5l-2.5-2.5z" fill="#e8b060"/><path d="M448.8 59.3h2.5v2.5" fill="none" stroke="#fff" stroke-width="0.7"/><path d="M453.2 56l5.5-4.5" stroke="#2e6db3" stroke-width="1.5"/><path d="M384.5 76.3h-5M381.4 74.3l-2 2 2 2" stroke="#2e6db3" stroke-width="1.3" fill="none"/><rect x="384" y="75.2" width="6.2" height="2.6" fill="#e8b060"/><path d="M380 73.2h2.2M380 79.4h2.2M380 81.4h2.2" stroke="#888" stroke-width="0.8"/><path d="M395.2 77h3.6l-1.8 2.2z" fill="#666"/><path d="M403 73.5h3v1.5M403 80.5h3v1.5" stroke="#777" stroke-width="0.9" fill="none"/><rect x="403" y="76.8" width="4" height="1.6" fill="#e8a030"/><path d="M407.5 75.3l6.5 6.2M414 75.3l-6.5 6.2" stroke="#d9402a" stroke-width="1.3"/><rect x="418.3" y="70" width="1" height="16" fill="#dbe5f1"/><path d="M421 73h5M421 75.3h3M421 77.6h2.5M421 80h2.5" stroke="#777" stroke-width="0.9"/><path d="M425.5 75l2.5-2" stroke="#e8a030" stroke-width="1.2"/><circle cx="426.6" cy="78.3" r="2.8" fill="none" stroke="#2e6db3" stroke-width="1.2"/><path d="M428.6 80.3l3.2 2.6" stroke="#2e6db3" stroke-width="1.5"/><path d="M437.5 77h3.6l-1.8 2.2z" fill="#666"/><rect x="443.8" y="70" width="1" height="16" fill="#dbe5f1"/><text x="447.6" y="79.5" font-family="Liberation Sans" font-size="6" letter-spacing="-0.3" fill="#444">AZ</text><path d="M452.3 82.8l6.2-5.6" stroke="#2e6db3" stroke-width="1.5"/><path d="M463.7 77h3.6l-1.8 2.2z" fill="#666"/><path d="M480 51.5h9.3v9.3h-9.3z" fill="none" stroke="#7a7a7a" stroke-width="1.2"/><path d="M482 51.5v3.7h5.3v-3.7M482.3 60.8v-2.5h4.7v2.5" stroke="#7a7a7a" stroke-width="0.9" fill="none"/><path d="M495.3 50.5h7.5M495.3 50.5v7.5M497 52.2h7.5M497 52.2v7.5" stroke="#999" stroke-width="0.8" fill="none"/><path d="M498.5 53.7h7.5v7.5h-7.5z" fill="#fff" stroke="#7a7a7a" stroke-width="1.1"/><path d="M500 53.7v2.7h4.5v-2.7M500.3 61.2v-2h4v2" stroke="#7a7a7a" stroke-width="0.8" fill="none"/><path d="M479.5 77l2.5 2.5 4.5-5" stroke="#2f8f6a" stroke-width="1.5" fill="none"/><path d="M487.7 75.7v4M485.5 78.8l2.2 2.5 2.2-2.5z" stroke="#2e6db3" stroke-width="1.4" fill="#2e6db3"/><rect x="494.3" y="70" width="1" height="16" fill="#dbe5f1"/><path d="M499 74.5h7l-.8 8.3h-5.4z" fill="none" stroke="#c4c4c4" stroke-width="0.9"/><ellipse cx="502.5" cy="74.3" rx="3.5" ry="1" fill="none" stroke="#c4c4c4" stroke-width="0.8"/><path d="M501.5 78.5l1-1 1 1" stroke="#ccc" stroke-width="0.6" fill="none"/><rect x="519" y="48.6" width="16" height="15.7" fill="#c5daf3"/><rect x="535.3" y="70" width="16" height="16.1" fill="#c5daf3"/><rect x="601.6" y="70" width="16.2" height="16.1" fill="#c5daf3"/><path d="M522.8464 50.4h2.5392l0.2116 2.4599999999999995l0.6348 4.919999999999999q0 0.82 -0.50784 0.82h-3.21632q-0.50784 0 -0.50784 -0.82l0.6348 -4.919999999999999z" fill="#555"/><rect x="523.6659999999999" y="53.269999999999996" width="0.9" height="3.69" fill="#a8a8a8"/><path d="M527.8144 50.4h2.5392l0.2116 2.4599999999999995l0.6348 4.919999999999999q0 0.82 -0.50784 0.82h-3.21632q-0.50784 0 -0.50784 -0.82l0.6348 -4.919999999999999z" fill="#555"/><rect x="528.6339999999999" y="53.269999999999996" width="0.9" height="3.69" fill="#a8a8a8"/><rect x="525.832" y="52.86" width="1.535999999999999" height="2.8699999999999997" fill="#555"/><rect x="521.3" y="58.5" width="11" height="2.3" fill="#fff" stroke="#8a8a8a" stroke-width="0.6"/><path d="M522.5 59.7h8.6" stroke="#bbb" stroke-width="0.5" stroke-dasharray="0.8 0.6"/><path d="M537.8464 53.9h2.5392l0.2116 2.37l0.6348 4.74q0 0.79 -0.50784 0.79h-3.21632q-0.50784 0 -0.50784 -0.79l0.6348 -4.74z" fill="#555"/><rect x="538.6659999999999" y="56.665" width="0.9" height="3.555" fill="#a8a8a8"/><path d="M542.8144 53.9h2.5392l0.2116 2.37l0.6348 4.74q0 0.79 -0.50784 0.79h-3.21632q-0.50784 0 -0.50784 -0.79l0.6348 -4.74z" fill="#555"/><rect x="543.6339999999999" y="56.665" width="0.9" height="3.555" fill="#a8a8a8"/><rect x="540.832" y="56.269999999999996" width="1.535999999999999" height="2.765" fill="#555"/><path d="M546.6 50.2v4.3M544.4 52.35h4.4" stroke="#3d9a70" stroke-width="1.4"/><path d="M553.7912 50.4h2.3735999999999997l0.1978 2.4l0.5933999999999999 4.8q0 0.8 -0.47472 0.8h-3.00656q-0.47472 0 -0.47472 -0.8l0.5933999999999999 -4.8z" fill="#bdbdbd"/><rect x="554.5279999999999" y="53.199999999999996" width="0.9" height="3.6" fill="#e8e8e8"/><path d="M558.4352 50.4h2.3735999999999997l0.1978 2.4l0.5933999999999999 4.8q0 0.8 -0.47472 0.8h-3.00656q-0.47472 0 -0.47472 -0.8l0.5933999999999999 -4.8z" fill="#bdbdbd"/><rect x="559.1719999999999" y="53.199999999999996" width="0.9" height="3.6" fill="#e8e8e8"/><rect x="556.556" y="52.8" width="1.4879999999999998" height="2.8" fill="#bdbdbd"/><path d="M557.5 59.5l4.5-4.2 2.6 2.5-4.5 4.2z" fill="#d4d4d4" stroke="#c0c0c0" stroke-width="0.5"/><rect x="568.5" y="49" width="1" height="15" fill="#dbe5f1"/><path d="M571.7 51.5h7.3l-2.8 3.3v3.3l-1.7-.8v-2.5z" fill="#3d9a70"/><path d="M571.7 60.3h5" stroke="#888" stroke-width="0.6" stroke-dasharray="1 0.6"/><path d="M576.6 60.4l6.3-5.8" stroke="#2e6db3" stroke-width="1.5"/><path d="M522.5 73h7v2M524 75h6.8v5.5M522.5 73v5h2" stroke="#b5b5b5" stroke-width="0.9" fill="none"/><path d="M526 80l2.5 2.5M528.6 77.5v2.5" stroke="#c0c0c0" stroke-width="0.9"/><circle cx="541" cy="77.2" r="3.6" fill="none" stroke="#2e6db3" stroke-width="1.2"/><path d="M543.6 79.8l3.8 3" stroke="#2e6db3" stroke-width="1.6"/><path d="M557.3 72.8v2M557.3 76.5v2M557.3 80.3v2.2" stroke="#2e6db3" stroke-width="1"/><rect x="560.5" y="73.4" width="6" height="9" fill="none" stroke="#888" stroke-width="1"/><path d="M560.5 76.4h6M560.5 79.4h6" stroke="#888" stroke-width="0.8"/><path d="M571.9000000000001 77h3.6l-1.8 2.2z" fill="#666"/><rect x="579.8" y="75.3" width="5.8" height="4.3" rx="2.1" fill="none" stroke="#3a3a3a" stroke-width="1.3"/><rect x="584.3" y="75.3" width="5.8" height="4.3" rx="2.1" fill="none" stroke="#3a3a3a" stroke-width="1.3"/><text x="604.6" y="55.5" font-family="Liberation Sans" font-size="6.6" font-weight="bold" fill="#4a8ad0">A</text><text x="604.9" y="61.4" font-family="Liberation Sans" font-size="6.6" font-weight="bold" fill="#7b3fb0">Z</text><text x="620.9" y="55.5" font-family="Liberation Sans" font-size="6.6" font-weight="bold" fill="#7b3fb0">Z</text><text x="620.7" y="61.4" font-family="Liberation Sans" font-size="6.6" font-weight="bold" fill="#4a8ad0">A</text><path d="M612.4 50.8v10M610.7 58.8l1.7 2.1 1.7-2.1M628.3 50.8v10M626.6 58.8l1.7 2.1 1.7-2.1" stroke="#444" stroke-width="0.9" fill="none"/><rect x="604" y="73" width="10.5" height="10.2" fill="#fff" stroke="#777" stroke-width="0.9"/><rect x="604" y="72.6" width="10.5" height="1.8" fill="#2b5797"/><path d="M607 75.5v6M605.3 79.8l1.7 2 1.7-2" stroke="#2e6db3" stroke-width="1.1" fill="none"/><path d="M611.3 82v-6M609.6 77.5l1.7-2 1.7 2" stroke="#7b3fb0" stroke-width="1.1" fill="none"/><rect x="649.5" y="50.5" width="4.5" height="7.5" rx="0.7" fill="#fff" stroke="#666" stroke-width="0.9"/><rect x="651.2" y="52.2" width="1.2" height="1.5" fill="#2e6db3"/><g fill="#f0b050"><rect x="643.5" y="55.0" width="3.6" height="1"/><rect x="643.5" y="56.8" width="3.6" height="1"/><rect x="643.5" y="58.6" width="3.6" height="1"/></g><g fill="#f0b050"><rect x="647.8" y="58.0" width="3.6" height="1"/><rect x="647.8" y="59.8" width="3.6" height="1"/><rect x="647.8" y="61.6" width="3.6" height="1"/></g><rect x="658.5" y="49" width="1" height="15" fill="#dbe5f1"/><circle cx="667.5" cy="56" r="5.6" fill="#2f6db5"/><rect x="666.7" y="55" width="1.7" height="4.6" fill="#fff"/><circle cx="667.5" cy="53.2" r="1" fill="#fff"/><rect x="676.9" y="49" width="1" height="15" fill="#dbe5f1"/><path d="M681.5 51.5h5l3 3v6.3h-8z" fill="#fff" stroke="#666" stroke-width="1"/><path d="M684.3 56.5l3 2.8M687.3 56.5l-3 2.8" stroke="#d9402a" stroke-width="0.9"/><rect x="695" y="49" width="1" height="15" fill="#dbe5f1"/><path d="M701.3 51.2l2.8 2.8-2.8 2.8-2.8-2.8z" fill="#fbe3b8" stroke="#eea830" stroke-width="1"/><path d="M699.5 56.5v2.5h2.5" fill="none" stroke="#eea830" stroke-width="0.9"/><path d="M702.3 57.3l2 2.2 4.2-5.4" stroke="#2f8f6a" stroke-width="1.5" fill="none"/><rect x="643.7" y="72.8" width="7" height="6" fill="#fff" stroke="#666" stroke-width="0.9"/><rect x="645.5" y="74.6" width="3.4" height="1.4" fill="#555"/><g fill="#f0b050"><rect x="647.5" y="79.0" width="3.6" height="1"/><rect x="647.5" y="80.8" width="3.6" height="1"/><rect x="647.5" y="82.6" width="3.6" height="1"/></g><g fill="#f0b050"><rect x="650.8" y="76.5" width="3.6" height="1"/><rect x="650.8" y="78.3" width="3.6" height="1"/><rect x="650.8" y="80.1" width="3.6" height="1"/></g><path d="M660 72.5h5.5l1 1v5.5h-6.5z" fill="#fff" stroke="#666" stroke-width="0.9"/><path d="M661.5 74.5h3M661.5 76.2h3" stroke="#777" stroke-width="0.6"/><path d="M661.9 77.5l2 2 4.6-5" stroke="#2f8f6a" stroke-width="1.4" fill="none"/><g fill="#f0b050"><rect x="662.8" y="80.0" width="3.6" height="1"/><rect x="662.8" y="81.8" width="3.6" height="1"/><rect x="662.8" y="83.6" width="3.6" height="1"/></g><g fill="#f0b050"><rect x="666.5" y="76.8" width="3.6" height="1"/><rect x="666.5" y="78.6" width="3.6" height="1"/><rect x="666.5" y="80.39999999999999" width="3.6" height="1"/></g><path d="M676.5 72.7l6.5 6.2M683 72.7l-6.5 6.2" stroke="#d9402a" stroke-width="1.4"/><g fill="#f0b050"><rect x="679.5" y="80.0" width="3.6" height="1"/><rect x="679.5" y="81.8" width="3.6" height="1"/><rect x="679.5" y="83.6" width="3.6" height="1"/></g><g fill="#f0b050"><rect x="683" y="76.8" width="3.6" height="1"/><rect x="683" y="78.6" width="3.6" height="1"/><rect x="683" y="80.39999999999999" width="3.6" height="1"/></g><rect x="690.9" y="70" width="1" height="16" fill="#dbe5f1"/><path d="M695 73.3h9.3v5M695 73.3v4.5M695 75.6h9.3M698 73.3v4.5M701.2 73.3v4.5" stroke="#bdbdbd" stroke-width="0.8" fill="none"/><path d="M694.8 79.8h4.5M698 78.3l1.5 1.5-1.5 1.5M700.5 80.5l1.5 1.7 2.7-3.3" stroke="#aaa" stroke-width="0.9" fill="none"/><path d="M725.5 50.7h4.5l2.6 2.6v7.3h-7.1z" fill="#fff" stroke="#7a7a7a" stroke-width="0.9"/><rect x="722.4" y="53.9" width="7.4" height="4.4" fill="#fff" stroke="#2e6db3" stroke-width="1.1" stroke-dasharray="1.3 0.9"/><path d="M724.5 58.5h3v2.5h-3z" fill="#f0b050"/><path d="M728 56.8h2v1.2h-2z" fill="#f0b050"/><path d="M734.7 55.2h3.6l-1.8 2.2z" fill="#666"/><path d="M724 73h5l2.5 2.5v7.5h-7.5z" fill="#fff" stroke="#777" stroke-width="0.9"/><circle cx="729.5" cy="78.8" r="2.1" fill="#fff" stroke="#2e6db3" stroke-width="1.1"/><path d="M731 80.3l2.3 2.4" stroke="#2e6db3" stroke-width="1.4"/><rect x="741.2" y="72.6" width="4.2" height="2.6" fill="#fff" stroke="#666" stroke-width="0.9"/><rect x="739.4" y="75.1" width="7.8" height="3.6" rx="0.8" fill="#8a8a8a" stroke="#555" stroke-width="0.6"/><rect x="741.2" y="77.6" width="4.2" height="2.2" fill="#fff" stroke="#666" stroke-width="0.7"/><path d="M743.8 80.8h5M747.3 79l1.7 1.8-1.7 1.8" stroke="#2e6db3" stroke-width="1.3" fill="none"/><path d="M755.0 77h3.6l-1.8 2.2z" fill="#666"/></svg>

</body></html>
